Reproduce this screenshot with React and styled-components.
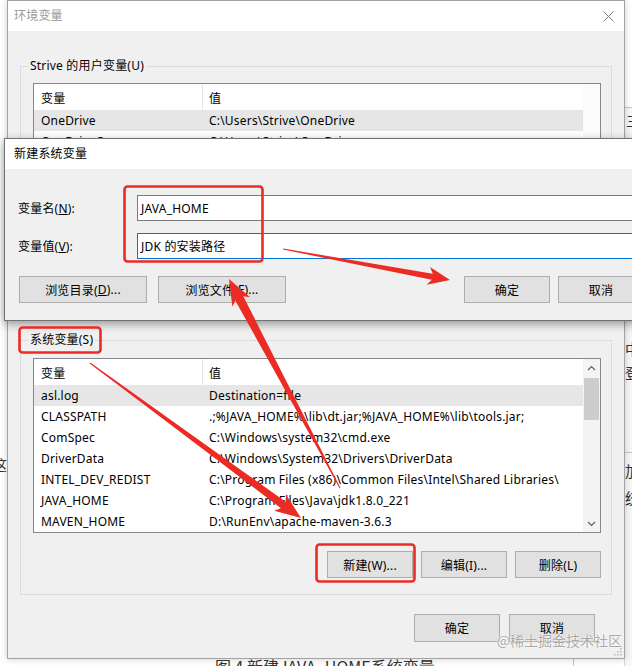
import React from "react";
import styled, { createGlobalStyle } from "styled-components";

const UI = `"Noto Sans", "Noto Sans CJK SC", sans-serif`;
const CJK = `"Noto Sans CJK SC", "Noto Sans", sans-serif`;
const RED = "#ec2b25";

const Global = createGlobalStyle`
  html, body { margin: 0; padding: 0; background: #ffffff; }
  body { font-family: ${UI}; font-size: 12px; color: #000; }
  * { box-sizing: border-box; }
`;

const Desktop = styled.div`
  position: relative;
  width: 632px;
  height: 666px;
  overflow: hidden;
  background: #ffffff;
  font-family: ${UI};
  font-size: 12px;
  letter-spacing: 0.2px;
  color: #000;
`;

/* ---------- background page fragments (free canvas) ---------- */
const BackPanel = styled.div`
  position: absolute;
  left: 624px;
  top: 107px;
  width: 40px;
  height: 560px;
  background: #f7f7f7;
  border-left: 1px solid #d6d6d6;
  border-top: 1px solid #c8c8c8;
`;
const Fragment = styled.span`
  position: absolute;
  left: ${(p) => p.$x}px;
  top: ${(p) => p.$y}px;
  font-family: ${CJK};
  font-size: ${(p) => p.$size || 14}px;
  line-height: 1;
  letter-spacing: 0;
  color: ${(p) => p.$color || "#333"};
  white-space: nowrap;
`;
const Rule = styled.div`
  position: absolute;
  left: ${(p) => p.$x}px;
  top: ${(p) => p.$y}px;
  width: ${(p) => p.$w}px;
  height: ${(p) => p.$h}px;
  background: #c8c8c8;
`;

/* ---------- windows ---------- */
const EnvWindow = styled.section`
  position: absolute;
  left: 7px;
  top: 0;
  width: 618px;
  height: 659px;
  border: 1px solid #a3a3a3;
  background: #f0f0f0;
  box-shadow: 0 0 7px rgba(0, 0, 0, 0.2);
  display: flex;
  flex-direction: column;
`;

const NewVarWindow = styled.section`
  position: absolute;
  left: 4px;
  top: 138px;
  width: 656px;
  height: 183px;
  border: 1px solid #727272;
  background: #f0f0f0;
  box-shadow: 0 3px 9px rgba(0, 0, 0, 0.38);
  display: flex;
  flex-direction: column;
`;

const TitleBar = styled.header`
  flex: none;
  height: 30px;
  background: #ffffff;
  display: flex;
  align-items: center;
  justify-content: space-between;
  padding: 0 10px 0 ${(p) => p.$pad}px;
`;

const WindowTitle = styled.span`
  font-family: ${CJK};
  font-size: 12px;
  margin-top: -3px;
  color: ${(p) => (p.$active ? "#000" : "#9a9a9a")};
`;

const EnvBody = styled.div`
  flex: 1;
  display: flex;
  flex-direction: column;
  padding: 27px 12px 0 12px;
`;

const GroupBox = styled.fieldset`
  margin: ${(p) => p.$mt || 0}px 0 0 0;
  padding: ${(p) => p.$pt}px 10px ${(p) => p.$pb}px 12px;
  border: 1px solid #dcdcdc;
  min-width: 0;
`;

const GroupLabel = styled.legend`
  padding: 0 2px;
  margin-left: -5px;
  line-height: 16px;
  font-size: 12px;
`;

/* ---------- list view ---------- */
const ListView = styled.div`
  display: grid;
  grid-template-columns: 1fr 17px;
  height: 175px;
  border: 1px solid #828790;
  background: #ffffff;
  overflow: hidden;
`;

const ListTable = styled.div`
  display: flex;
  flex-direction: column;
  min-width: 0;
  overflow: hidden;
`;

const HeaderRow = styled.div`
  display: grid;
  grid-template-columns: 169px 1fr;
  height: 26px;
  flex: none;
`;

const HeaderCell = styled.div`
  display: flex;
  align-items: center;
  padding-left: ${(p) => p.$pad}px;
  border-right: ${(p) => (p.$divider ? "1px solid #e5e5e5" : "none")};
  font-family: ${CJK};
`;

const Row = styled.div`
  display: grid;
  grid-template-columns: 169px 1fr;
  height: 21px;
  flex: none;
  align-items: center;
  white-space: nowrap;
  background: ${(p) => (p.$selected ? "#e6e6e6" : "transparent")};
`;

const Cell = styled.span`
  padding-left: ${(p) => p.$pad}px;
  overflow: hidden;
`;

const ScrollBar = styled.div`
  display: flex;
  flex-direction: column;
  background: ${(p) => (p.$empty ? "#fbfbfb" : "#f4f4f4")};
`;

const ScrollArrow = styled.div`
  height: 17px;
  flex: none;
  display: flex;
  align-items: center;
  justify-content: center;
`;

const ScrollTrack = styled.div`
  flex: 1;
  padding: 2px 1px 0 1px;
`;

const ScrollThumb = styled.div`
  height: 42px;
  background: #cdcdcd;
`;

/* ---------- buttons ---------- */
const ButtonRow = styled.div`
  display: flex;
  justify-content: ${(p) => p.$justify || "flex-end"};
  gap: ${(p) => p.$gap || 8}px;
  margin-top: ${(p) => p.$mt || 0}px;
  padding-right: ${(p) => p.$pr || 0}px;
  padding-left: ${(p) => p.$pl || 0}px;
`;

const Spacer = styled.div`
  flex: 1;
`;

const Button = styled.button`
  width: ${(p) => p.$w || 86}px;
  height: ${(p) => p.$h || 27}px;
  flex: none;
  border: 1px solid #adadad;
  background: #e1e1e1;
  font-family: ${UI};
  font-size: 12px;
  letter-spacing: 0.2px;
  color: #000;
  padding: 0;
  display: inline-flex;
  align-items: center;
  justify-content: center;
  margin-left: ${(p) => p.$ml || 0}px;
`;

/* ---------- new variable form ---------- */
const NewBody = styled.div`
  flex: 1;
  padding: 26px 15px 16px 13px;
  display: flex;
  flex-direction: column;
`;

const FormGrid = styled.div`
  display: grid;
  grid-template-columns: 119px 1fr;
  row-gap: 12px;
  align-items: center;
`;

const FieldLabel = styled.label`
  font-size: 12px;
  margin-top: -1px;
`;

const TextBox = styled.div`
  height: 26px;
  border: 1px solid ${(p) => (p.$focused ? "#0078d7" : "#7a7a7a")};
  background: #ffffff;
  padding: 0 3px;
  display: flex;
  align-items: center;
  white-space: nowrap;
`;

const CloseGlyph = styled.svg`
  width: 11px;
  height: 11px;
  flex: none;
`;

const Grip = styled.svg`
  position: absolute;
  right: 2px;
  bottom: 2px;
  width: 8px;
  height: 8px;
`;

/* ---------- overlays ---------- */
const Annotations = styled.svg`
  position: absolute;
  left: 0;
  top: 0;
  width: 632px;
  height: 666px;
  pointer-events: none;
`;

const Watermark = styled.div`
  position: absolute;
  right: 10px;
  top: 631px;
  font-family: ${CJK};
  font-size: 14px;
  line-height: 18px;
  letter-spacing: 0;
  color: rgba(140, 140, 140, 0.75);
  text-shadow: 0 0 2px #fff, 0 0 1px #fff;
  white-space: nowrap;
`;

const Caption = styled.div`
  position: absolute;
  left: 215px;
  top: 655px;
  font-family: ${CJK};
  font-size: 16px;
  line-height: 22px;
  letter-spacing: 0;
  color: #333;
  white-space: nowrap;
`;

function arrowPoints(tail, tip, headLen, headHalf, shaftHalf) {
  const [x0, y0] = tail;
  const [x1, y1] = tip;
  const dx = x1 - x0;
  const dy = y1 - y0;
  const L = Math.hypot(dx, dy);
  const ux = dx / L;
  const uy = dy / L;
  const nx = -uy;
  const ny = ux;
  const bx = x1 - ux * headLen;
  const by = y1 - uy * headLen;
  const pts = [
    [x0 + nx * 0.5, y0 + ny * 0.5],
    [bx + nx * shaftHalf, by + ny * shaftHalf],
    [bx - ux * 4 + nx * headHalf, by - uy * 4 + ny * headHalf],
    [x1, y1],
    [bx - ux * 4 - nx * headHalf, by - uy * 4 - ny * headHalf],
    [bx - nx * shaftHalf, by - ny * shaftHalf],
    [x0 - nx * 0.5, y0 - ny * 0.5],
  ];
  return pts.map((p) => p.map((v) => v.toFixed(1)).join(",")).join(" ");
}

const Chevron = ({ up }) => (
  <svg width="9" height="6" viewBox="0 0 9 6">
    <polyline
      points={up ? "1,5 4.5,1.5 8,5" : "1,1 4.5,4.5 8,1"}
      fill="none"
      stroke="#606060"
      strokeWidth="1.2"
    />
  </svg>
);

function VarList({ rows, scroll }) {
  return (
    <ListView>
      <ListTable>
        <HeaderRow>
          <HeaderCell $pad={7} $divider>变量</HeaderCell>
          <HeaderCell $pad={6}>值</HeaderCell>
        </HeaderRow>
        {rows.map(([name, value, sel]) => (
          <Row key={name} $selected={sel}>
            <Cell $pad={7}>{name}</Cell>
            <Cell $pad={6}>{value}</Cell>
          </Row>
        ))}
      </ListTable>
      {scroll ? (
        <ScrollBar>
          <ScrollArrow>
            <Chevron up />
          </ScrollArrow>
          <ScrollTrack>
            <ScrollThumb />
          </ScrollTrack>
          <ScrollArrow>
            <Chevron />
          </ScrollArrow>
        </ScrollBar>
      ) : (
        <ScrollBar $empty />
      )}
    </ListView>
  );
}

const userRows = [
  ["OneDrive", "C:\\Users\\Strive\\OneDrive", true],
  ["OneDriveConsumer", "C:\\Users\\Strive\\OneDrive"],
  ["Path", "C:\\Users\\Strive\\AppData\\Local\\Microsoft\\WindowsApps;"],
  ["TEMP", "C:\\Users\\Strive\\AppData\\Local\\Temp"],
  ["TMP", "C:\\Users\\Strive\\AppData\\Local\\Temp"],
];

const systemRows = [
  ["asl.log", "Destination=file", true],
  ["CLASSPATH", ".;%JAVA_HOME%\\lib\\dt.jar;%JAVA_HOME%\\lib\\tools.jar;"],
  ["ComSpec", "C:\\Windows\\system32\\cmd.exe"],
  ["DriverData", "C:\\Windows\\System32\\Drivers\\DriverData"],
  ["INTEL_DEV_REDIST", "C:\\Program Files (x86)\\Common Files\\Intel\\Shared Libraries\\"],
  ["JAVA_HOME", "C:\\Program Files\\Java\\jdk1.8.0_221"],
  ["MAVEN_HOME", "D:\\RunEnv\\apache-maven-3.6.3"],
];

export default function App() {
  return (
    <Desktop>
      <Global />

      <BackPanel />
      <Fragment $x={626} $y={113} $size={14}>三</Fragment>
      <Fragment $x={625} $y={341} $size={15}>中</Fragment>
      <Fragment $x={625} $y={365} $size={15}>登</Fragment>
      <Rule $x={625} $y={452} $w={10} $h={1} />
      <Fragment $x={625} $y={463} $size={15}>加</Fragment>
      <Fragment $x={625} $y={490} $size={15}>统</Fragment>
      <Fragment $x={-7} $y={457} $size={14}>这</Fragment>
      <Rule $x={573} $y={658} $w={1} $h={10} />
      <Caption>图 4 新建JAVA_HOME系统变量</Caption>

      <EnvWindow>
        <TitleBar $pad={6}>
          <WindowTitle>环境变量</WindowTitle>
          <CloseGlyph viewBox="0 0 11 11">
            <path d="M0.5 0.5 L10.5 10.5 M10.5 0.5 L0.5 10.5" stroke="#7a7a7a" strokeWidth="1" />
          </CloseGlyph>
        </TitleBar>
        <EnvBody>
          <GroupBox $pt={9} $pb={14}>
            <GroupLabel>Strive 的用户变量(U)</GroupLabel>
            <VarList rows={userRows} />
            <ButtonRow $mt={14}>
              <Button>新建(N)...</Button>
              <Button>编辑(E)...</Button>
              <Button>删除(D)</Button>
            </ButtonRow>
          </GroupBox>
          <GroupBox $mt={18} $pt={10} $pb={16}>
            <GroupLabel>系统变量(S)</GroupLabel>
            <VarList rows={systemRows} scroll />
            <ButtonRow $mt={18}>
              <Button>新建(W)...</Button>
              <Button>编辑(I)...</Button>
              <Button>删除(L)</Button>
            </ButtonRow>
          </GroupBox>
          <ButtonRow $mt={19} $gap={9} $pr={17}>
            <Button $h={28}>确定</Button>
            <Button $h={28}>取消</Button>
          </ButtonRow>
        </EnvBody>
        <Grip viewBox="0 0 8 8">
          <g fill="#b5b5b5">
            <rect x="6" y="0" width="1.5" height="1.5" />
            <rect x="3" y="3" width="1.5" height="1.5" />
            <rect x="6" y="3" width="1.5" height="1.5" />
            <rect x="0" y="6" width="1.5" height="1.5" />
            <rect x="3" y="6" width="1.5" height="1.5" />
            <rect x="6" y="6" width="1.5" height="1.5" />
          </g>
        </Grip>
      </EnvWindow>

      <NewVarWindow>
        <TitleBar $pad={9}>
          <WindowTitle $active>新建系统变量</WindowTitle>
        </TitleBar>
        <NewBody>
          <FormGrid>
            <FieldLabel>变量名(<u>N</u>):</FieldLabel>
            <TextBox>JAVA_HOME</TextBox>
            <FieldLabel>变量值(<u>V</u>):</FieldLabel>
            <TextBox $focused>JDK 的安装路径</TextBox>
          </FormGrid>
          <ButtonRow $mt={17} $justify="flex-start" $gap={11} $pl={1}>
            <Button $w={128}>浏览目录(<u>D</u>)...</Button>
            <Button $w={128}>浏览文件(<u>F</u>)...</Button>
            <Spacer />
            <Button>确定</Button>
            <Button $ml={-3}>取消</Button>
          </ButtonRow>
        </NewBody>
      </NewVarWindow>

      <Annotations viewBox="0 0 632 666">
        <g fill="none" stroke={RED} strokeWidth="2.6">
          <rect x="124.5" y="186.5" width="138" height="75" rx="3" />
          <rect x="19.5" y="327.5" width="81" height="25" rx="3" />
          <rect x="316.5" y="544.5" width="98" height="37" rx="3" />
        </g>
        <g fill={RED}>
          <polygon points={arrowPoints([283, 249], [450, 280], 18, 9, 3)} />
          <polygon points={arrowPoints([340, 488], [229, 279], 22, 10, 4.5)} />
          <polygon points={arrowPoints([90, 363], [301, 518], 22, 10, 4)} />
        </g>
      </Annotations>

      <Watermark>@稀土掘金技术社区</Watermark>
    </Desktop>
  );
}
